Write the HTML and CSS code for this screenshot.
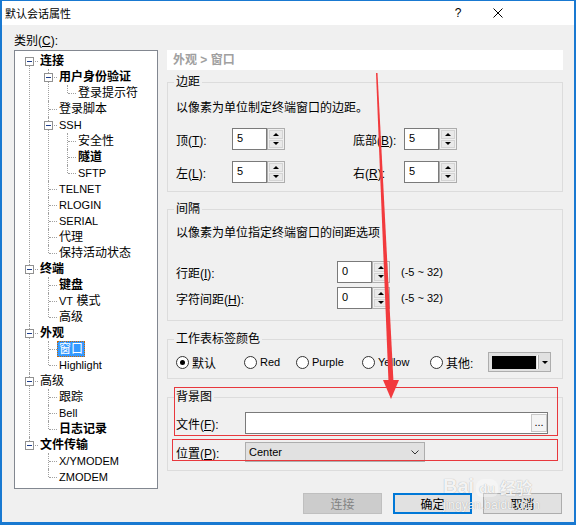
FILE: index.html
```html
<!DOCTYPE html>
<html lang="zh-CN">
<head>
<meta charset="utf-8">
<title>默认会话属性</title>
<link rel="stylesheet" href="styles.css">
</head>
<body>
<div class="window">
  <div class="titlebar">
    <span class="title">默认会话属性</span>
    <span class="help">?</span>
    <svg class="close" width="10" height="10" viewBox="0 0 10 10"><path d="M0.5 0.5 L9.5 9.5 M9.5 0.5 L0.5 9.5" stroke="#000" stroke-width="1" fill="none"/></svg>
  </div>
  <div class="body">
    <div class="cat">类别(<u>C</u>):</div>
    <div class="main">
      <div class="tree">
        <ul>
          <li><div class="row"><span class="twig"><span class="box"></span></span><span class="lbl b">连接</span></div>
            <ul>
              <li><div class="row"><span class="twig"><span class="box"></span></span><span class="lbl b">用户身份验证</span></div>
                <ul>
                  <li><div class="row"><span class="twig"></span><span class="lbl">登录提示符</span></div></li>
                </ul>
              </li>
              <li><div class="row"><span class="twig"></span><span class="lbl">登录脚本</span></div></li>
              <li><div class="row"><span class="twig"><span class="box"></span></span><span class="lbl en">SSH</span></div>
                <ul>
                  <li><div class="row"><span class="twig"></span><span class="lbl">安全性</span></div></li>
                  <li><div class="row"><span class="twig"></span><span class="lbl b">隧道</span></div></li>
                  <li><div class="row"><span class="twig"></span><span class="lbl en">SFTP</span></div></li>
                </ul>
              </li>
              <li><div class="row"><span class="twig"></span><span class="lbl en">TELNET</span></div></li>
              <li><div class="row"><span class="twig"></span><span class="lbl en">RLOGIN</span></div></li>
              <li><div class="row"><span class="twig"></span><span class="lbl en">SERIAL</span></div></li>
              <li><div class="row"><span class="twig"></span><span class="lbl">代理</span></div></li>
              <li><div class="row"><span class="twig"></span><span class="lbl">保持活动状态</span></div></li>
            </ul>
          </li>
          <li><div class="row"><span class="twig"><span class="box"></span></span><span class="lbl b">终端</span></div>
            <ul>
              <li><div class="row"><span class="twig"></span><span class="lbl b">键盘</span></div></li>
              <li><div class="row"><span class="twig"></span><span class="lbl"><span class="en">VT</span> 模式</span></div></li>
              <li><div class="row"><span class="twig"></span><span class="lbl">高级</span></div></li>
            </ul>
          </li>
          <li><div class="row"><span class="twig"><span class="box"></span></span><span class="lbl b">外观</span></div>
            <ul>
              <li><div class="row"><span class="twig"></span><span class="lbl sel">窗口</span></div></li>
              <li><div class="row"><span class="twig"></span><span class="lbl en">Highlight</span></div></li>
            </ul>
          </li>
          <li><div class="row"><span class="twig"><span class="box"></span></span><span class="lbl">高级</span></div>
            <ul>
              <li><div class="row"><span class="twig"></span><span class="lbl">跟踪</span></div></li>
              <li><div class="row"><span class="twig"></span><span class="lbl en">Bell</span></div></li>
              <li><div class="row"><span class="twig"></span><span class="lbl b">日志记录</span></div></li>
            </ul>
          </li>
          <li><div class="row"><span class="twig"><span class="box"></span></span><span class="lbl b">文件传输</span></div>
            <ul>
              <li><div class="row"><span class="twig"></span><span class="lbl en">X/YMODEM</span></div></li>
              <li><div class="row"><span class="twig"></span><span class="lbl en">ZMODEM</span></div></li>
            </ul>
          </li>
        </ul>
      </div>

      <div class="panel">
        <div class="crumb">外观 &gt; 窗口</div>

        <fieldset class="grp g-margin">
          <legend>边距</legend>
          <div class="desc">以像素为单位制定终端窗口的边距。</div>
          <div class="mgrid">
            <span>顶(<u>T</u>):</span>
            <div class="spin"><span class="spin-val en">5</span><span class="spin-btns"><i class="up"></i><i class="dn"></i></span></div>
            <span>底部(<u>B</u>):</span>
            <div class="spin"><span class="spin-val en">5</span><span class="spin-btns"><i class="up"></i><i class="dn"></i></span></div>
            <span>左(<u>L</u>):</span>
            <div class="spin"><span class="spin-val en">5</span><span class="spin-btns"><i class="up"></i><i class="dn"></i></span></div>
            <span>右(<u>R</u>):</span>
            <div class="spin"><span class="spin-val en">5</span><span class="spin-btns"><i class="up"></i><i class="dn"></i></span></div>
          </div>
        </fieldset>

        <fieldset class="grp g-space">
          <legend>间隔</legend>
          <div class="desc">以像素为单位指定终端窗口的间距选项</div>
          <div class="sgrid">
            <span>行距(<u>I</u>):</span>
            <div class="spin"><span class="spin-val en">0</span><span class="spin-btns"><i class="up"></i><i class="dn"></i></span></div>
            <span class="range en">(-5 ~ 32)</span>
            <span>字符间距(<u>H</u>):</span>
            <div class="spin"><span class="spin-val en">0</span><span class="spin-btns"><i class="up"></i><i class="dn"></i></span></div>
            <span class="range en">(-5 ~ 32)</span>
          </div>
        </fieldset>

        <fieldset class="grp g-color">
          <legend>工作表标签颜色</legend>
          <div class="radios">
            <span class="radio"><span class="rb on"></span>默认</span>
            <span class="radio"><span class="rb"></span><span class="en">Red</span></span>
            <span class="radio"><span class="rb"></span><span class="en">Purple</span></span>
            <span class="radio"><span class="rb"></span><span class="en">Yellow</span></span>
            <span class="radio"><span class="rb"></span>其他:</span>
            <div class="colorpick"><span class="swatch"></span><span class="cp-sep"></span><span class="cp-arrow"></span></div>
          </div>
        </fieldset>

        <fieldset class="grp g-bg">
          <legend>背景图</legend>
          <div class="frow">
            <span class="flabel">文件(<u>F</u>):</span>
            <div class="file"><span class="browse">...</span></div>
          </div>
          <div class="frow prow">
            <span class="flabel">位置(<u>P</u>):</span>
            <div class="select"><span class="en">Center</span><svg width="8" height="5" viewBox="0 0 8 5"><path d="M0.5 0.5 L4 4 L7.5 0.5" stroke="#333" stroke-width="1" fill="none"/></svg></div>
          </div>
        </fieldset>
      </div>
    </div>

    <div class="buttons">
      <span class="btn dis">连接</span>
      <span class="btn def">确定</span>
      <span class="btn">取消</span>
    </div>
  </div>

  <div class="wm">
    <div class="wm-top"><span class="wm-bai">Bai</span><span class="wm-du">du</span><span class="wm-jy">经验</span></div>
    <div class="wm-url">jingyan.baidu.com</div>
  </div>

  <svg class="annot" width="576" height="525" viewBox="0 0 576 525">
    <rect x="174.5" y="387.5" width="383" height="48" fill="none" stroke="#e8383d" stroke-width="1"/>
    <rect x="172.5" y="439.5" width="385" height="21" fill="none" stroke="#e8383d" stroke-width="1"/>
    <polygon points="376,73 377.5,73 393.5,382 388.5,382" fill="#f23a3d"/>
    <polygon points="383,380 399,380 391,399" fill="#f23a3d"/>
  </svg>
</div>
</body>
</html>
```

FILE: styles.css
```css
* { box-sizing: border-box; }
html, body { margin: 0; padding: 0; }
body {
  width: 576px;
  height: 525px;
  overflow: hidden;
  background: #1979d1;
  font-family: "Liberation Sans", "Noto Sans CJK SC", sans-serif;
  font-size: 12px;
  color: #000;
}
u { text-decoration: underline; text-underline-offset: 1px; }
.en { font-size: 11px; }

.window {
  position: relative;
  width: 576px;
  height: 525px;
  border-style: solid;
  border-color: #1979d1;
  border-width: 1px 2px 3px 2px;
  background: #f0f0f0;
  display: flex;
  flex-direction: column;
}

/* title bar */
.titlebar {
  height: 24px;
  background: #fff;
  display: flex;
  align-items: center;
  padding: 0 71px 0 3px;
}
.title {
  flex: 1;
  font-family: "Noto Sans CJK SC", sans-serif;
  font-size: 11px;
  line-height: 14px;
}
.help {
  width: 12px;
  text-align: center;
  margin-right: 29px;
  font-size: 12px;
  line-height: 14px;
}
.close { display: block; flex: none; }

/* body */
.body {
  flex: 1;
  display: flex;
  flex-direction: column;
  padding: 8px 12px 0 12px;
}
.cat { height: 17px; line-height: 16px; }
.main { display: flex; gap: 9px; }

/* tree */
.tree {
  width: 144px;
  height: 439px;
  flex: none;
  background: #fff;
  border: 1px solid #828790;
  padding-top: 2px;
  overflow: hidden;
}
.tree ul { list-style: none; margin: 0; padding: 0 0 0 19px; }
.tree > ul { padding-left: 0; }
.tree li { position: relative; }
.tree li::before {
  content: "";
  position: absolute;
  left: 14px;
  top: 0;
  bottom: 0;
  border-left: 1px dotted #a0a0a0;
}
.tree li:last-child::before { bottom: auto; height: 8px; }
.tree > ul > li:first-child::before { top: 8px; }
.tree li::after {
  content: "";
  position: absolute;
  left: 15px;
  top: 8px;
  width: 8px;
  border-top: 1px dotted #a0a0a0;
}
.row { display: flex; height: 16px; }
.twig { width: 23px; flex: none; padding: 4px 0 0 10px; }
.box {
  position: relative;
  z-index: 1;
  display: block;
  width: 9px;
  height: 9px;
  border: 1px solid #919191;
  background: #fff;
}
.box::after {
  content: "";
  position: absolute;
  left: 1px;
  top: 3px;
  width: 5px;
  height: 1px;
  background: #1d3d8c;
}
.lbl {
  line-height: 14px;
  height: 16px;
  padding: 0 1px;
  border: 1px solid transparent;
  white-space: nowrap;
}
.lbl.b { font-weight: bold; }
.lbl.sel {
  background: #3399ff;
  color: #fff;
  border: 1px dotted #cc6600;
}

/* right panel */
.panel { width: 396px; flex: none; display: flex; flex-direction: column; }
.crumb {
  height: 20px;
  background: #fff;
  color: #a0a0a0;
  font-weight: bold;
  line-height: 20px;
  padding-left: 6px;
}
.grp {
  margin: 0;
  min-width: 0;
  border: 1px solid #dcdcdc;
  padding: 0 8px 8px 8px;
}
.grp legend {
  padding: 0 2px;
  margin-left: -2px;
  line-height: 16px;
}
.g-margin { margin-top: 4px; padding-top: 10px; padding-bottom: 8px; }
.g-space { margin-top: 9px; padding-top: 8px; padding-bottom: 11px; }
.g-color { margin-top: 10px; padding-top: 5px; padding-bottom: 6px; }
.g-bg { margin-top: 10px; padding-top: 7px; padding-bottom: 8px; }
.desc { line-height: 16px; height: 16px; }

.mgrid {
  display: grid;
  grid-template-columns: 56px 121px 51px 53px;
  grid-template-rows: 22px 22px;
  row-gap: 11px;
  align-items: center;
  margin-top: 12px;
}
.sgrid {
  display: grid;
  grid-template-columns: 161px 53px auto;
  grid-template-rows: 22px 22px;
  row-gap: 4px;
  align-items: center;
  margin-top: 20px;
}
.range { padding-left: 11px; }

/* spinner */
.spin { display: flex; width: 53px; height: 22px; }
.spin-val {
  width: 35px;
  border: 1px solid #7a7a7a;
  background: #fff;
  padding-left: 4px;
  line-height: 19px;
}
.spin-btns {
  width: 18px;
  display: flex;
  flex-direction: column;
  border: 1px solid #adadad;
  background: #f0f0f0;
  padding: 1px;
  gap: 1px;
}
.spin-btns i {
  flex: 1;
  display: flex;
  align-items: center;
  justify-content: center;
  background: #e9e9e9;
  border: 1px solid #d4d4d4;
}
.spin-btns .up::after {
  content: "";
  border-left: 3px solid transparent;
  border-right: 3px solid transparent;
  border-bottom: 3px solid #000;
}
.spin-btns .dn::after {
  content: "";
  border-left: 3px solid transparent;
  border-right: 3px solid transparent;
  border-top: 3px solid #000;
}

/* radios */
.radios {
  display: grid;
  grid-template-columns: 68px 52px 66px 68px 58px 63px;
  height: 20px;
  align-items: center;
}
.radio { display: flex; align-items: center; gap: 3px; white-space: nowrap; }
.rb {
  width: 13px;
  height: 13px;
  flex: none;
  border: 1px solid #333;
  border-radius: 50%;
  background: #fff;
  display: flex;
  align-items: center;
  justify-content: center;
}
.rb.on::after {
  content: "";
  width: 5px;
  height: 5px;
  border-radius: 50%;
  background: #000;
}
.colorpick {
  width: 63px;
  height: 20px;
  border: 1px solid #adadad;
  background: #e1e1e1;
  display: flex;
  align-items: center;
  padding: 0 3px;
}
.swatch { width: 44px; height: 13px; background: #000; flex: none; }
.cp-sep {
  width: 2px;
  height: 14px;
  margin-left: 1px;
  border-left: 1px solid #fff;
  border-right: 1px solid #b0b0b0;
}
.cp-arrow {
  margin-left: 3px;
  border-left: 3px solid transparent;
  border-right: 3px solid transparent;
  border-top: 3px solid #000;
}

/* background image */
.frow { display: flex; align-items: center; }
.prow { margin-top: 8px; }
.flabel { width: 69px; flex: none; }
.file {
  width: 303px;
  height: 22px;
  border: 1px solid #7a7a7a;
  background: #fff;
  display: flex;
  justify-content: flex-end;
  padding: 1px 0;
}
.browse {
  width: 16px;
  height: 18px;
  background: #f4f4f4;
  border: 1px solid #c8c8c8;
  text-align: center;
  line-height: 14px;
  font-size: 11px;
}
.select {
  width: 180px;
  height: 20px;
  border: 1px solid #adadad;
  background: #e1e1e1;
  display: flex;
  align-items: center;
  justify-content: space-between;
  padding: 0 5px 0 3px;
}
.select svg { display: block; }

/* buttons */
.buttons {
  display: flex;
  justify-content: flex-end;
  gap: 11px;
  margin-top: 4px;
}
.btn {
  width: 79px;
  height: 21px;
  border: 1px solid #adadad;
  background: #e1e1e1;
  display: flex;
  align-items: center;
  justify-content: center;
}
.btn.dis { background: #cccccc; border-color: #bfbfbf; color: #838383; }
.btn.def { border: 2px solid #0078d7; }

/* watermark + annotation overlays */
.wm {
  position: absolute;
  left: 441px;
  top: 470px;
  color: rgba(255, 255, 255, 0.9);
  text-shadow: 0 0 1px rgba(0, 0, 0, 0.35);
  pointer-events: none;
}
.wm-top { display: flex; align-items: flex-end; height: 26px; }
.wm-bai { font-family: "Liberation Sans", sans-serif; font-weight: bold; font-size: 20px; line-height: 22px; }
.wm-du {
  font-family: "Liberation Sans", sans-serif;
  font-weight: bold;
  font-size: 13px;
  line-height: 16px;
  margin: 0 2px;
  padding: 2px 3px 0;
  border-radius: 8px 8px 6px 6px;
  background: rgba(255, 255, 255, 0.35);
}
.wm-jy { font-family: "Noto Sans CJK SC", sans-serif; font-weight: bold; font-size: 16px; line-height: 20px; }
.wm-url { font-family: "Liberation Sans", sans-serif; font-size: 12px; line-height: 14px; margin-top: 1px; }
.annot { position: absolute; left: -2px; top: -1px; pointer-events: none; }
```
